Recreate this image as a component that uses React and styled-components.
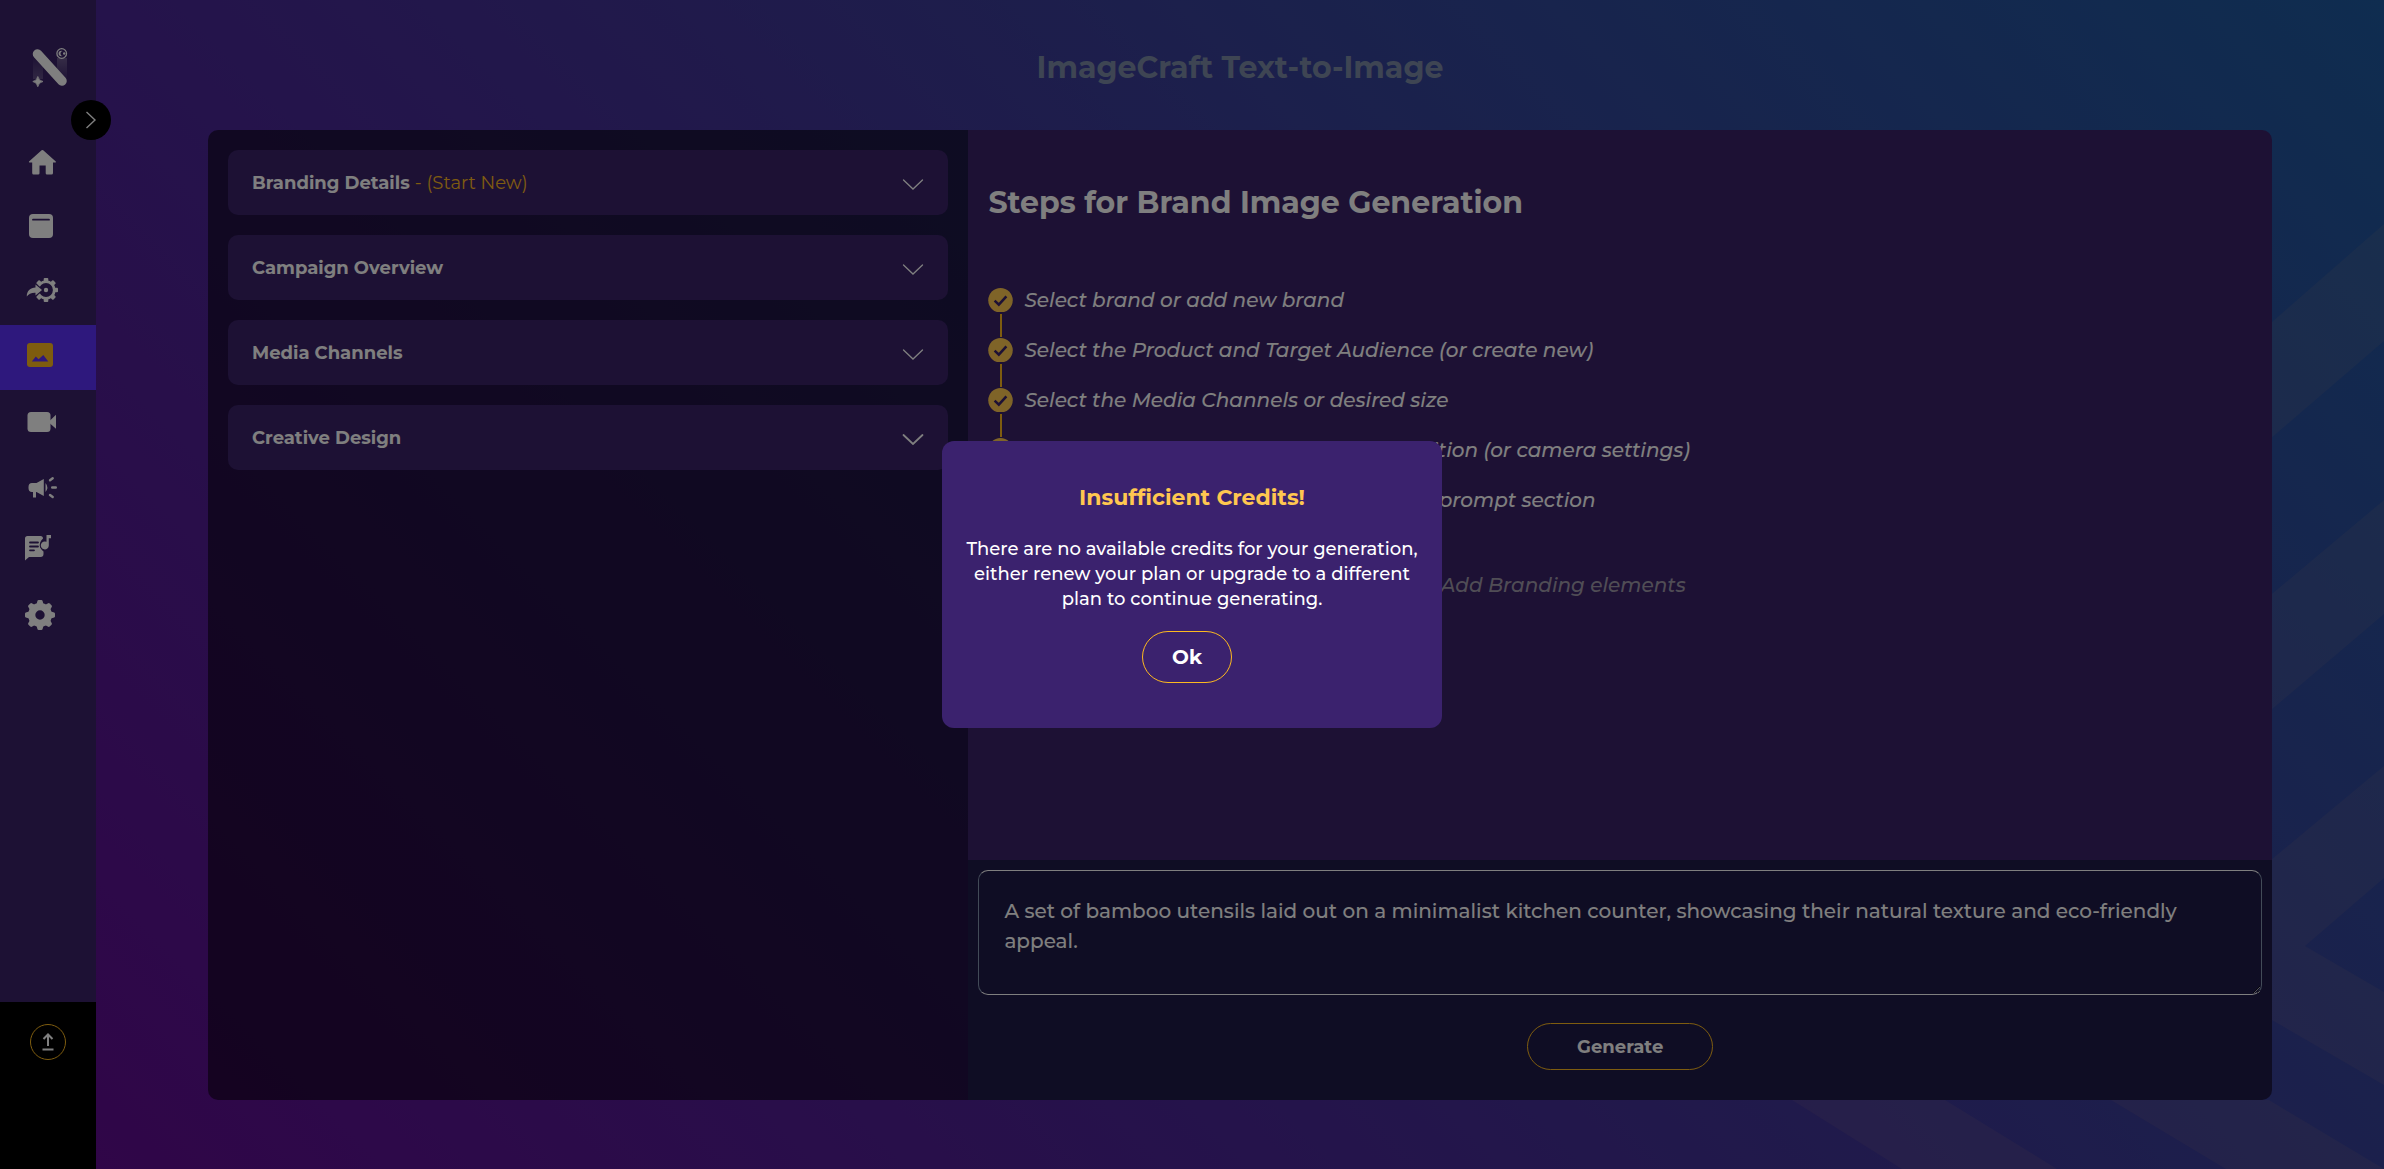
import React from "react";
import styled, { createGlobalStyle } from "styled-components";

const GlobalStyle = createGlobalStyle`
  *, *::before, *::after { box-sizing: border-box; }
  body {
    margin: 0;
    background: #432ea0;
    color: #fff;
    font-family: Montserrat, Inter, sans-serif;
  }
  button, textarea { font-family: inherit; }
`;

const gold = "#fdb91f";
const plum = "#3a2268";

const Page = styled.div`
  position: relative;
  display: flex;
  min-height: 100vh;
  background: linear-gradient(45deg, #620990 0%, #4c2496 33%, #384098 66%, #1e5aa0 100%);
`;

const Stripes = styled.svg`
  position: absolute;
  right: 0;
  bottom: 0;
  fill: rgba(255, 190, 110, 0.07);
`;

const Sidebar = styled.aside`
  position: relative;
  flex: none;
  display: flex;
  flex-direction: column;
  width: 96px;
  background: ${plum};
`;

const LogoLink = styled.a`
  display: flex;
  justify-content: center;
  height: 130px;
  padding-top: 44px;
`;

const Toggle = styled.button`
  position: absolute;
  top: 100px;
  right: -15px;
  display: grid;
  place-items: center;
  width: 40px;
  height: 40px;
  padding: 0;
  border: 0;
  border-radius: 50%;
  background: #000;
`;

const NavList = styled.nav`
  flex: 1;
`;

const NavItem = styled.a`
  display: flex;
  align-items: center;
  height: 65px;
  padding-left: 24px;
  color: ${(p) => (p.$active ? gold : "#fff")};
  --behind: ${(p) => (p.$active ? "#5c30fa" : plum)};
  background: var(--behind);
`;

const SidebarFooter = styled.div`
  display: flex;
  justify-content: center;
  align-items: flex-start;
  height: 167px;
  padding-top: 22px;
  background: #000;
`;

const UploadButton = styled.button`
  display: grid;
  place-items: center;
  width: 36px;
  height: 36px;
  padding: 0;
  border: 1px solid ${gold};
  border-radius: 50%;
  background: transparent;
`;

const Main = styled.main`
  position: relative;
  flex: 1;
  display: flex;
  flex-direction: column;
  padding: 0 112px 69px;
`;

const PageTitle = styled.h1`
  margin: 0;
  padding: 48px 0 42px;
  color: #7c8ba6;
  font-size: 30px;
  line-height: 40px;
  font-weight: 700;
  text-align: center;
`;

const Panel = styled.section`
  flex: 1;
  display: grid;
  grid-template-columns: 7fr 12fr;
  border-radius: 10px;
  overflow: hidden;
`;

const Settings = styled.div`
  display: flex;
  flex-direction: column;
  gap: 20px;
  padding: 20px;
  background: rgba(0, 0, 0, 0.54);
`;

const AccordionButton = styled.button`
  display: flex;
  align-items: center;
  justify-content: space-between;
  height: 65px;
  padding: 0 24px;
  border: 0;
  border-radius: 10px;
  background: ${plum};
  color: #fff;
  font-size: 18px;
  line-height: 24px;
  font-weight: 700;
  text-align: left;
`;

const Hint = styled.span`
  color: ${gold};
  font-weight: 400;
`;

const Workspace = styled.div`
  display: flex;
  flex-direction: column;
`;

const Steps = styled.div`
  flex: 1;
  padding: 53px 20px;
  background: ${plum};
`;

const StepsTitle = styled.h2`
  margin: 0 0 64px;
  font-size: 30px;
  line-height: 40px;
  font-weight: 700;
`;

const StepList = styled.ol`
  margin: 0;
  padding: 0;
  list-style: none;
`;

const Step = styled.li`
  display: flex;
  gap: 11px;
  height: 50px;
  padding-top: 1px;
  font-size: 20px;
  line-height: 25px;
  font-style: italic;
  font-weight: 500;
`;

const OptionalStep = styled(Step)`
  margin-top: 35px;
  padding-left: 36px;
  color: #a09aab;
`;

const Marker = styled.span`
  display: flex;
  flex-direction: column;
  align-items: center;
  gap: 2px;
  width: 25px;
`;

const Connector = styled.span`
  width: 2px;
  height: 23px;
  background: ${gold};
`;

const Prompt = styled.form`
  display: flex;
  flex-direction: column;
  align-items: center;
  gap: 28px;
  padding: 10px 10px 30px;
  background: #1f1a48;
`;

const PromptBox = styled.textarea`
  display: block;
  width: 100%;
  height: 125px;
  padding: 25px;
  border: 1px solid;
  border-color: #fff #8496b0;
  border-radius: 10px;
  background: transparent;
  color: #fff;
  font-size: 20px;
  line-height: 30px;
  font-weight: 500;
  resize: vertical;
`;

const PillButton = styled.button`
  height: ${(p) => (p.$large ? 52 : 47)}px;
  padding: 0 ${(p) => (p.$large ? 29 : 49)}px;
  border: 1px solid ${gold};
  border-radius: 26px;
  background: transparent;
  color: #fff;
  font-size: ${(p) => (p.$large ? 20 : 18)}px;
  font-weight: 700;
`;

const Backdrop = styled.div`
  position: fixed;
  inset: 0;
  z-index: 10;
  display: grid;
  place-items: center;
  background: rgba(0, 0, 0, 0.5);
`;

const Dialog = styled.div`
  display: flex;
  flex-direction: column;
  align-items: center;
  width: 500px;
  padding: 42px 24px 45px;
  border-radius: 12px;
  background: #3b226e;
  text-align: center;
`;

const DialogTitle = styled.h2`
  margin: 0 0 24px;
  color: #ffc750;
  font-size: 22px;
  line-height: 30px;
  font-weight: 700;
`;

const DialogText = styled.p`
  margin: 0 0 19px;
  font-size: 18px;
  line-height: 25px;
  font-weight: 500;
`;

const DialogActions = styled.div`
  padding-right: 10px;
`;

const teeth = [0, 45, 90, 135, 180, 225, 270, 315];

const Icon = ({ children }) => (
  <svg width="36" height="35" viewBox="0 0 36 35" fill="currentColor" aria-hidden="true">
    {children}
  </svg>
);

const icons = {
  home: (
    <path d="M17.6 5.3q.8-.7 1.6 0L31.8 16.4q.6 1-.5 1H29V28q0 1.5-1.5 1.5H23q-1.3 0-1.3-1.3v-7.7h-6.2v7.7q0 1.3-1.3 1.3H9.6q-1.4 0-1.4-1.5V17.4H5.5q-1 0-.5-1Z" />
  ),
  library: (
    <>
      <rect x="5" y="4" width="24" height="24" rx="4" />
      <path d="M9 9.7H25" stroke="var(--behind)" strokeWidth="1.8" strokeLinecap="round" />
    </>
  ),
  automation: (
    <>
      <circle cx="22" cy="15" r="8.3" fill="none" stroke="currentColor" strokeWidth="2.8" />
      {teeth.map((a) => (
        <rect key={a} x="19.7" y="3" width="4.6" height="4" rx="1" transform={`rotate(${a} 22 15)`} />
      ))}
      <circle cx="22" cy="15" r="2.2" />
      <path
        d="M2.8 21.5C2.5 16 6.5 12.6 11.5 12.4V9.5L18 15L11.5 20.5V17.8C7.5 17.6 4.5 19 2.8 21.5Z"
        stroke="var(--behind)"
        strokeWidth="2.4"
        paintOrder="stroke"
      />
    </>
  ),
  image: (
    <>
      <rect x="3" y="3" width="26" height="24" rx="3" />
      <path d="M7.8 21.5L11.8 16.5L14.6 19.3L19.3 15L24.3 21.5Z" fill="var(--behind)" />
    </>
  ),
  video: (
    <>
      <rect x="3.5" y="7" width="23" height="20" rx="3.5" />
      <path d="M26 15.5L32 9.7V23.7L26 18.5Z" />
    </>
  ),
  campaign: (
    <>
      <path d="M8 13H12.5L19.8 9V26L12.5 22H12V27.5H9V22H8Q4.5 22 4.5 18V17Q4.5 13 8 13Z" />
      <path d="M21.5 13Q25.2 17.5 21.5 22Z" />
      <path
        d="M26 10.2L28.7 8.2M28.2 17.5H31.8M26 25L28.7 27"
        stroke="currentColor"
        strokeWidth="2.4"
        strokeLinecap="round"
      />
    </>
  ),
  audio: (
    <>
      <path d="M3.5 1H16.5Q19 1 19 3.5C14 8 15.5 13.5 19.5 16.5V19Q19.5 22 16.5 22H5L1 25.5V3.5Q1 1 3.5 1Z" />
      <path
        d="M6 7.5H14M6 11.5H14M6 15.3H10"
        stroke="var(--behind)"
        strokeWidth="1.8"
        strokeLinecap="round"
      />
      <path
        d="M22.5 0H27V3.3H24.8V10.5A4 4 0 1 1 22.5 6.8Z"
        stroke="var(--behind)"
        strokeWidth="2"
        paintOrder="stroke"
      />
    </>
  ),
  settings: (
    <>
      <circle cx="16" cy="15" r="8.3" fill="none" stroke="currentColor" strokeWidth="7.2" />
      {teeth.map((a) => (
        <path key={a} d="M12.3 5L13.5 0.8Q13.8 0 14.7 0H17.3Q18.2 0 18.5 0.8L19.7 5Z" transform={`rotate(${a} 16 15)`} />
      ))}
    </>
  ),
};

const navItems = [
  ["home", "Home"],
  ["library", "Library"],
  ["automation", "Automation"],
  ["image", "Text to image"],
  ["video", "Video"],
  ["campaign", "Campaigns"],
  ["audio", "Audio"],
  ["settings", "Settings"],
];

const Logo = () => (
  <svg width="40" height="44" viewBox="0 0 40 44" aria-hidden="true">
    <defs>
      <linearGradient id="streakUp" x1="0" y1="0" x2="0" y2="1">
        <stop offset="0" stopColor="#fff" stopOpacity="0" />
        <stop offset="1" stopColor="#fff" stopOpacity="0.2" />
      </linearGradient>
      <linearGradient id="streakDown" x1="0" y1="0" x2="0" y2="1">
        <stop offset="0" stopColor="#fff" stopOpacity="0.25" />
        <stop offset="1" stopColor="#fff" stopOpacity="0" />
      </linearGradient>
    </defs>
    <rect x="5" y="12" width="10" height="23" fill="url(#streakUp)" />
    <rect x="29" y="14" width="10" height="24" fill="url(#streakDown)" />
    <path d="M9.5 10L34 37" stroke="#fff" strokeWidth="9.5" strokeLinecap="round" />
    <path d="M9.8 32.5Q10.6 36.8 15 37.5Q10.6 38.3 9.8 42.7Q9 38.3 4.8 37.5Q9 36.8 9.8 32.5Z" fill="#fff" stroke="#fff" strokeWidth="0.8" />
    <circle cx="33.7" cy="9.5" r="4.8" fill={plum} stroke="#fff" strokeWidth="1.3" />
    <circle cx="33.4" cy="9.5" r="2.8" fill="#fff" />
    <circle cx="35" cy="9.5" r="2.5" fill={plum} />
    <circle cx="36.2" cy="9.5" r="1.2" fill="#fff" />
  </svg>
);

const Chevron = ({ bold }) => (
  <svg width="22" height="14" viewBox="0 0 22 14" fill="none" stroke="#fff" strokeWidth={bold ? 1.8 : 1.3} aria-hidden="true">
    <path d="M1.5 4L11 13L20.5 4" strokeLinecap="round" />
  </svg>
);

const sections = [
  { title: "Branding Details", hint: "- (Start New)" },
  { title: "Campaign Overview" },
  { title: "Media Channels" },
  { title: "Creative Design", bold: true },
];

const steps = [
  "Select brand or add new brand",
  "Select the Product and Target Audience (or create new)",
  "Select the Media Channels or desired size",
  "Select Style, Lighting, Tone and Composition (or camera settings)",
  "Generate or type the final prompt in the prompt section",
];

const CheckMark = () => (
  <svg width="25" height="25" viewBox="0 0 25 25" aria-hidden="true">
    <circle cx="12.5" cy="12.5" r="12.5" fill="#ffc850" />
    <path d="M6.5 12.8L10.8 17L18.5 8.5" fill="none" stroke={plum} strokeWidth="2.6" />
  </svg>
);

export default function App() {
  return (
    <>
      <GlobalStyle />
      <Page>
        <Stripes width="592" height="945" viewBox="0 0 592 945" aria-hidden="true">
          <path d="M592 0L400 168V282L592 117Z" />
          <path d="M592 276L400 437V553L592 390Z" />
          <path d="M592 542L366 730L592 861V768L513 722L592 654Z" />
          <path d="M0 876H153L265 945H110Z" />
          <path d="M319 876H477L592 945H434Z" />
        </Stripes>
        <Sidebar>
          <LogoLink href="#" aria-label="Dashboard">
            <Logo />
          </LogoLink>
          <Toggle type="button" aria-label="Expand menu">
            <svg width="12" height="18" viewBox="0 0 12 18" fill="none" stroke="#fff" strokeWidth="1.4" aria-hidden="true">
              <path d="M1.5 1L10 9L1.5 17" />
            </svg>
          </Toggle>
          <NavList aria-label="Main">
            {navItems.map(([key, label]) => (
              <NavItem key={key} href="#" aria-label={label} $active={key === "image"}>
                <Icon>{icons[key]}</Icon>
              </NavItem>
            ))}
          </NavList>
          <SidebarFooter>
            <UploadButton type="button" aria-label="Upload">
              <svg width="12" height="18" viewBox="0 0 12 18" fill="none" stroke="#fff" strokeWidth="2" aria-hidden="true">
                <path d="M6 13V2M1.5 6L6 1.5L10.5 6M0.5 16.5H11.5" />
              </svg>
            </UploadButton>
          </SidebarFooter>
        </Sidebar>
        <Main>
          <PageTitle>ImageCraft Text-to-Image</PageTitle>
          <Panel>
            <Settings>
              {sections.map((s) => (
                <AccordionButton key={s.title} type="button" aria-expanded="false">
                  <span>
                    {s.title} {s.hint && <Hint>{s.hint}</Hint>}
                  </span>
                  <Chevron bold={s.bold} />
                </AccordionButton>
              ))}
            </Settings>
            <Workspace>
              <Steps>
                <StepsTitle>Steps for Brand Image Generation</StepsTitle>
                <StepList>
                  {steps.map((text, i) => (
                    <Step key={text}>
                      <Marker>
                        <CheckMark />
                        {i < steps.length - 1 && <Connector />}
                      </Marker>
                      {text}
                    </Step>
                  ))}
                  <OptionalStep>Optional: Edit the generated image and Add Branding elements</OptionalStep>
                </StepList>
              </Steps>
              <Prompt onSubmit={(e) => e.preventDefault()}>
                <PromptBox
                  aria-label="Image prompt"
                  defaultValue="A set of bamboo utensils laid out on a minimalist kitchen counter, showcasing their natural texture and eco-friendly appeal."
                />
                <PillButton type="submit">Generate</PillButton>
              </Prompt>
            </Workspace>
          </Panel>
        </Main>
      </Page>
      <Backdrop>
        <Dialog role="dialog" aria-modal="true" aria-labelledby="credits-title">
          <DialogTitle id="credits-title">Insufficient Credits!</DialogTitle>
          <DialogText>
            There are no available credits for your generation, either renew your plan or upgrade to a different plan to
            continue generating.
          </DialogText>
          <DialogActions>
            <PillButton type="button" $large>
              Ok
            </PillButton>
          </DialogActions>
        </Dialog>
      </Backdrop>
    </>
  );
}
